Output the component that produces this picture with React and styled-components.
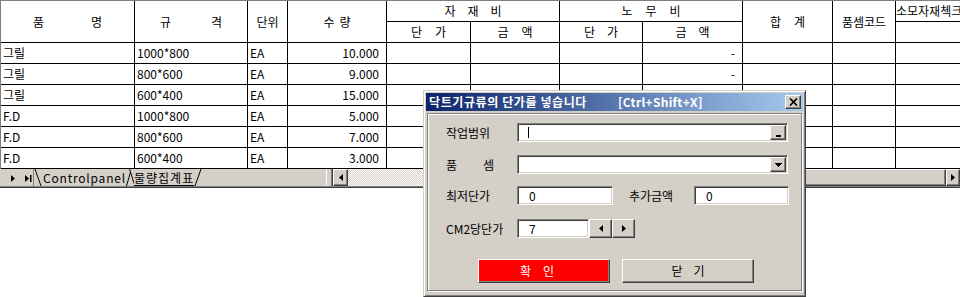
import React from 'react';
import styled, { createGlobalStyle, css } from 'styled-components';

const FONT = "'Noto Sans CJK KR', 'Noto Sans', 'Liberation Sans', sans-serif";
const FACE = '#d4d0c8';

const GlobalStyle = createGlobalStyle`
  html, body {
    margin: 0;
    padding: 0;
    background: #fff;
  }
  body {
    font-family: ${FONT};
    font-size: 12px;
    color: #000;
  }
`;

const raised = css`
  box-sizing: border-box;
  border: 1px solid;
  border-color: #fff #404040 #404040 #fff;
  box-shadow: inset -1px -1px #808080;
  background: ${FACE};
`;

const Screen = styled.div`
  position: relative;
  width: 960px;
  height: 297px;
  overflow: hidden;
  display: flex;
  flex-direction: column;
  background: #fff;
  line-height: 14px;
`;

/* ---------- sheet ---------- */

const Sheet = styled.div`
  flex: none;
  display: grid;
  grid-template-columns: 134px 113px 40px 99px 84px 89px 83px 100px 90px 63px 100px;
  grid-auto-rows: 21px;
  border-top: 1px solid #808080;
  border-left: 1px solid #808080;
`;

const Cell = styled.div`
  grid-column: span ${p => p.$cs || 1};
  grid-row: span ${p => p.$rs || 1};
  box-sizing: border-box;
  border-right: 1px solid #000;
  border-bottom: 1px solid #000;
  display: flex;
  align-items: center;
  justify-content: ${p =>
    p.$align === 'right' ? 'flex-end' : p.$align === 'center' ? 'center' : 'flex-start'};
  padding: ${p => (p.$align === 'right' ? '0 7px 0 2px' : p.$flush ? '0' : '0 2px')};
  white-space: nowrap;
  overflow: hidden;
`;

const Spread = styled.span`
  display: inline-flex;
  gap: ${p => p.$gap || 0}px;
  white-space: nowrap;
`;

const Letters = ({ text, gap }) => (
  <Spread $gap={gap}>
    {[...text].map((c, i) => (
      <span key={i}>{c}</span>
    ))}
  </Spread>
);

/* ---------- sheet tabs + scrollbar ---------- */

const TabBar = styled.div`
  flex: none;
  height: 17px;
  display: flex;
  background: ${FACE};
`;

const TabArea = styled.div`
  width: 326px;
  flex: none;
  display: flex;
  align-items: stretch;
`;

const Nav = styled.div`
  width: 34px;
  box-sizing: border-box;
  flex: none;
  display: flex;
  align-items: center;
  gap: 10px;
  padding: 1px 0 0 11px;
  border-right: 1px solid #808080;
`;

const Glyph = styled.svg`
  display: block;
  flex: none;
`;

const TabLabel = styled.span`
  display: flex;
  align-items: center;
  white-space: nowrap;
  letter-spacing: ${p => p.$ls || 0}px;
  margin-left: ${p => p.$ml || 0}px;
  text-decoration: ${p => (p.$active ? 'underline' : 'none')};
  text-underline-offset: 2px;
`;

const Splitter = styled.div`
  width: 7px;
  flex: none;
  box-sizing: border-box;
  border-left: 1px solid #fff;
  border-right: 1px solid #404040;
  box-shadow: inset -1px 0 #808080;
`;

const ScrollButton = styled.div`
  ${raised};
  width: ${p => p.$w || 15}px;
  flex: none;
  display: flex;
  align-items: center;
  justify-content: center;
`;

const Track = styled.div`
  flex: 1;
  display: flex;
  justify-content: flex-end;
  background: repeating-conic-gradient(#fff 0 25%, ${FACE} 0 50%) 0 0 / 2px 2px;
`;

const Thumb = styled.div`
  ${raised};
  width: 300px;
`;

const Workspace = styled.div`
  flex: 1;
  background: #fff;
  border-top: 1px solid #808080;
  box-shadow: inset 0 1px #404040;
`;

/* ---------- dialog ---------- */

const Dialog = styled.div`
  position: absolute;
  left: 423px;
  top: 90px;
  width: 383px;
  height: 207px;
  box-sizing: border-box;
  padding: 2px;
  background: ${FACE};
  border: 1px solid;
  border-color: ${FACE} #404040 #404040 ${FACE};
  box-shadow: inset 1px 1px #fff, inset -1px -1px #808080;
  display: flex;
  flex-direction: column;
`;

const TitleBar = styled.div`
  flex: none;
  height: 18px;
  display: flex;
  align-items: center;
  padding: 0 2px 0 3px;
  background: linear-gradient(to right, #0a246a, #a6caf0);
  color: #fff;
  font-weight: bold;
  white-space: nowrap;
`;

const TitleText = styled.span`
  width: ${p => p.$w || 'auto'};
  flex: none;
  letter-spacing: ${p => p.$ls || 0}px;
`;

const CloseButton = styled.div`
  ${raised};
  margin-left: auto;
  width: 16px;
  height: 14px;
  display: flex;
  align-items: center;
  justify-content: center;
`;

const Frame = styled.div`
  flex: 1;
  margin: 2px 1px 3px;
  border: 1px solid #808080;
  box-shadow: inset 1px 1px #fff, 1px 1px #fff;
  padding: 9px 0 0 18px;
  display: flex;
  flex-direction: column;
`;

const FormRow = styled.div`
  display: flex;
  align-items: center;
  height: ${p => p.$h || 19}px;
  margin-top: ${p => p.$mt || 0}px;
`;

const Label = styled.div`
  width: ${p => p.$w || 71}px;
  margin-left: ${p => p.$ml || 0}px;
  flex: none;
  white-space: nowrap;
`;

const Field = styled.div`
  width: ${p => p.$w}px;
  height: 19px;
  flex: none;
  box-sizing: border-box;
  background: #fff;
  border: 1px solid;
  border-color: #808080 #fff #fff #808080;
  box-shadow: inset 1px 1px #404040, inset -1px -1px ${FACE};
  display: flex;
  align-items: center;
  padding: 1px 1px 1px 11px;
`;

const Caret = styled.span`
  width: 1px;
  height: 11px;
  margin-left: -1px;
  background: #000;
`;

const FieldButton = styled.div`
  ${raised};
  margin-left: auto;
  width: 16px;
  height: 100%;
  display: flex;
  align-items: ${p => (p.$bottom ? 'flex-end' : 'center')};
  justify-content: center;
  padding-bottom: ${p => (p.$bottom ? 2 : 0)}px;
`;

const SpinButton = styled.div`
  ${raised};
  width: 23px;
  height: 19px;
  flex: none;
  display: flex;
  align-items: center;
  justify-content: center;
`;

const ButtonRow = styled.div`
  display: flex;
  gap: 12px;
  margin: 21px 0 0 32px;
`;

const PushButton = styled.div`
  ${raised};
  width: 132px;
  height: 24px;
  display: flex;
  align-items: center;
  justify-content: center;
  padding-right: ${p => (p.$primary ? 14 : 0)}px;
  background: ${p => (p.$primary ? '#ff0000' : FACE)};
  color: ${p => (p.$primary ? '#fff' : '#000')};
`;

/* ---------- drawings ---------- */

const Tri = ({ dir = 'right' }) => {
  if (dir === 'down') {
    return (
      <Glyph width="7" height="4" viewBox="0 0 7 4" shapeRendering="crispEdges">
        <polygon points="0,0 7,0 3.5,4" fill="#000" />
      </Glyph>
    );
  }
  const pts = dir === 'left' ? '4,0 0,3.5 4,7' : '0,0 4,3.5 0,7';
  return (
    <Glyph width="4" height="7" viewBox="0 0 4 7">
      <polygon points={pts} fill="#000" />
    </Glyph>
  );
};

const LastArrow = () => (
  <Glyph width="7" height="7" viewBox="0 0 7 7">
    <polygon points="0,0 4,3.5 0,7" fill="#000" />
    <rect x="5" y="0" width="1.5" height="7" fill="#000" />
  </Glyph>
);

const Edge = ({ slant }) => (
  <Glyph width="8" height="17" viewBox="0 0 8 17">
    {slant === 'back' && <line x1="1" y1="0" x2="7" y2="17" stroke="#000" strokeWidth="1" />}
    {slant === 'fwd' && <line x1="1" y1="17" x2="7" y2="0" stroke="#000" strokeWidth="1" />}
    {slant === 'join' && (
      <>
        <line x1="0.5" y1="17" x2="4.5" y2="3" stroke="#000" strokeWidth="1" />
        <line x1="3.5" y1="0" x2="9" y2="17" stroke="#000" strokeWidth="1" />
      </>
    )}
  </Glyph>
);

const CrossGlyph = () => (
  <Glyph width="9" height="8" viewBox="0 0 9 8">
    <path d="M1 0.5 L8 7.5 M8 0.5 L1 7.5" stroke="#000" strokeWidth="1.7" fill="none" />
  </Glyph>
);

const Dash = () => (
  <Glyph width="5" height="2" viewBox="0 0 5 2" shapeRendering="crispEdges">
    <rect width="5" height="2" fill="#000" />
  </Glyph>
);

/* ---------- data ---------- */

const items = [
  ['그릴', '1000*800', 'EA', '10.000'],
  ['그릴', '800*600', 'EA', '9.000'],
  ['그릴', '600*400', 'EA', '15.000'],
  ['F.D', '1000*800', 'EA', '5.000'],
  ['F.D', '800*600', 'EA', '7.000'],
  ['F.D', '600*400', 'EA', '3.000'],
];

export default function App() {
  return (
    <Screen>
      <GlobalStyle />
      <Sheet>
        <Cell $rs={2} $align="center"><Letters text="품명" gap={47} /></Cell>
        <Cell $rs={2} $align="center"><Letters text="규격" gap={40} /></Cell>
        <Cell $rs={2} $align="center">단위</Cell>
        <Cell $rs={2} $align="center"><Letters text="수량" gap={5} /></Cell>
        <Cell $cs={2} $align="center"><Letters text="자재비" gap={12} /></Cell>
        <Cell $cs={2} $align="center"><Letters text="노무비" gap={13} /></Cell>
        <Cell $rs={2} $align="center"><Letters text="합계" gap={13} /></Cell>
        <Cell $rs={2} $align="center">품셈코드</Cell>
        <Cell $flush>소모자재첵크</Cell>
        <Cell $align="center"><Letters text="단가" gap={13} /></Cell>
        <Cell $align="center"><Letters text="금액" gap={13} /></Cell>
        <Cell $align="center"><Letters text="단가" gap={12} /></Cell>
        <Cell $align="center"><Letters text="금액" gap={12} /></Cell>
        <Cell />
        {items.map(([name, spec, unit, qty], r) => (
          <React.Fragment key={r}>
            <Cell>{name}</Cell>
            <Cell>{spec}</Cell>
            <Cell>{unit}</Cell>
            <Cell $align="right">{qty}</Cell>
            <Cell />
            <Cell />
            <Cell />
            <Cell $align="right">-</Cell>
            <Cell />
            <Cell />
            <Cell />
          </React.Fragment>
        ))}
      </Sheet>

      <TabBar>
        <TabArea>
          <Nav>
            <Tri dir="right" />
            <LastArrow />
          </Nav>
          <Edge slant="back" />
          <TabLabel $ls={0.8} $ml={1}>Controlpanel</TabLabel>
          <Edge slant="join" />
          <TabLabel $active $ls={1}>물량집계표</TabLabel>
          <Edge slant="fwd" />
        </TabArea>
        <Splitter />
        <ScrollButton>
          <Tri dir="left" />
        </ScrollButton>
        <Track>
          <Thumb />
        </Track>
        <ScrollButton $w={14}>
          <Tri dir="right" />
        </ScrollButton>
      </TabBar>
      <Workspace />

      <Dialog>
        <TitleBar>
          <TitleText $w="189px" $ls={0.6}>닥트기규류의 단가를 넣습니다</TitleText>
          <TitleText $ls={0.3}>[Ctrl+Shift+X]</TitleText>
          <CloseButton>
            <CrossGlyph />
          </CloseButton>
        </TitleBar>
        <Frame>
          <FormRow>
            <Label>작업범위</Label>
            <Field $w={271}>
              <Caret />
              <FieldButton $bottom>
                <Dash />
              </FieldButton>
            </Field>
          </FormRow>
          <FormRow $mt={13}>
            <Label><Letters text="품셈" gap={26} /></Label>
            <Field $w={271}>
              <FieldButton>
                <Tri dir="down" />
              </FieldButton>
            </Field>
          </FormRow>
          <FormRow $mt={12}>
            <Label>최저단가</Label>
            <Field $w={96}>0</Field>
            <Label $w={65} $ml={16}>추가금액</Label>
            <Field $w={95}>0</Field>
          </FormRow>
          <FormRow $mt={14}>
            <Label>CM2당단가</Label>
            <Field $w={72}>7</Field>
            <SpinButton>
              <Tri dir="left" />
            </SpinButton>
            <SpinButton>
              <Tri dir="right" />
            </SpinButton>
          </FormRow>
          <ButtonRow>
            <PushButton $primary>
              <Letters text="확인" gap={12} />
            </PushButton>
            <PushButton>
              <Letters text="닫기" gap={11} />
            </PushButton>
          </ButtonRow>
        </Frame>
      </Dialog>
    </Screen>
  );
}
